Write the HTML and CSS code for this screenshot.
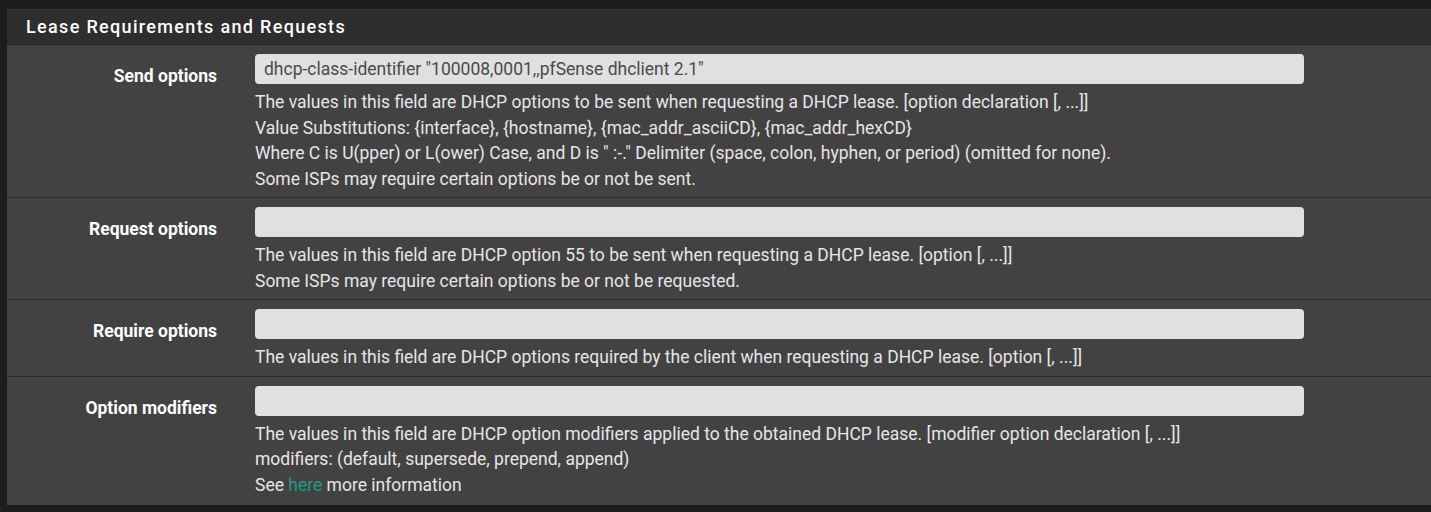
FILE: index.html
```html
<!DOCTYPE html>
<html lang="en">
<head>
    <meta charset="UTF-8">
    <title>Lease Requirements and Requests</title>
    <link rel="stylesheet" href="styles.css">
</head>
<body>
    <div class="panel">
        <div class="panel-heading">Lease Requirements and Requests</div>
        <div class="panel-body">
            <div class="form-row">
                <label class="row-label">Send options</label>
                <div class="row-field">
                    <input type="text" class="form-input" value="dhcp-class-identifier &quot;100008,0001,,pfSense dhclient 2.1&quot;">
                    <div class="help">
                        The values in this field are DHCP options to be sent when requesting a DHCP lease. [option declaration [, ...]]<br>
                        Value Substitutions: {interface}, {hostname}, {mac_addr_asciiCD}, {mac_addr_hexCD}<br>
                        Where C is U(pper) or L(ower) Case, and D is " :-." Delimiter (space, colon, hyphen, or period) (omitted for none).<br>
                        Some ISPs may require certain options be or not be sent.
                    </div>
                </div>
            </div>
            <div class="form-row">
                <label class="row-label">Request options</label>
                <div class="row-field">
                    <input type="text" class="form-input" value="">
                    <div class="help">
                        The values in this field are DHCP option 55 to be sent when requesting a DHCP lease. [option [, ...]]<br>
                        Some ISPs may require certain options be or not be requested.
                    </div>
                </div>
            </div>
            <div class="form-row">
                <label class="row-label">Require options</label>
                <div class="row-field">
                    <input type="text" class="form-input" value="">
                    <div class="help">
                        The values in this field are DHCP options required by the client when requesting a DHCP lease. [option [, ...]]
                    </div>
                </div>
            </div>
            <div class="form-row">
                <label class="row-label">Option modifiers</label>
                <div class="row-field">
                    <input type="text" class="form-input" value="">
                    <div class="help">
                        The values in this field are DHCP option modifiers applied to the obtained DHCP lease. [modifier option declaration [, ...]]<br>
                        modifiers: (default, supersede, prepend, append)<br>
                        See <a href="#">here</a> more information
                    </div>
                </div>
            </div>
        </div>
    </div>
</body>
</html>
```

FILE: styles.css
```css
body {
    margin: 0;
    padding: 9px 0 0 7px;
    background: #1d1d1d;
    font-family: Roboto, 'Liberation Sans', sans-serif;
    overflow: hidden;
}
.panel {
    width: 1440px;
    border-top: 1px solid #383838;
    background: #424242;
}
.panel-heading {
    height: 34px;
    line-height: 34px;
    padding-left: 19px;
    background: #2e2e2e;
    border-bottom: 1px solid #232323;
    color: #fff;
    font-size: 18px;
    font-weight: 500;
    letter-spacing: 1.33px;
}
.form-row {
    display: grid;
    grid-template-columns: 226px 1049px;
    column-gap: 22px;
    padding: 9px 0 5px;
    border-bottom: 1px solid #2a2a2a;
}
.form-row:last-child {
    border-bottom: none;
    padding-bottom: 7px;
}
.row-label {
    text-align: right;
    padding-right: 16px;
    padding-top: 10px;
    color: #fff;
    font-size: 17.5px;
    font-weight: bold;
    line-height: 25px;
}
.form-input {
    display: block;
    box-sizing: border-box;
    width: 100%;
    height: 30px;
    margin: 0;
    padding: 0 9px;
    border: none;
    border-radius: 4px;
    background: #e0e0e0;
    color: #4a4a4a;
    font-family: Roboto, 'Liberation Sans', sans-serif;
    font-size: 17.5px;
}
.help {
    margin-top: 6px;
    color: #e6e6e6;
    font-size: 17.5px;
    line-height: 25.5px;
    white-space: nowrap;
}
.help a {
    color: #1b9b87;
    text-decoration: none;
}
```
